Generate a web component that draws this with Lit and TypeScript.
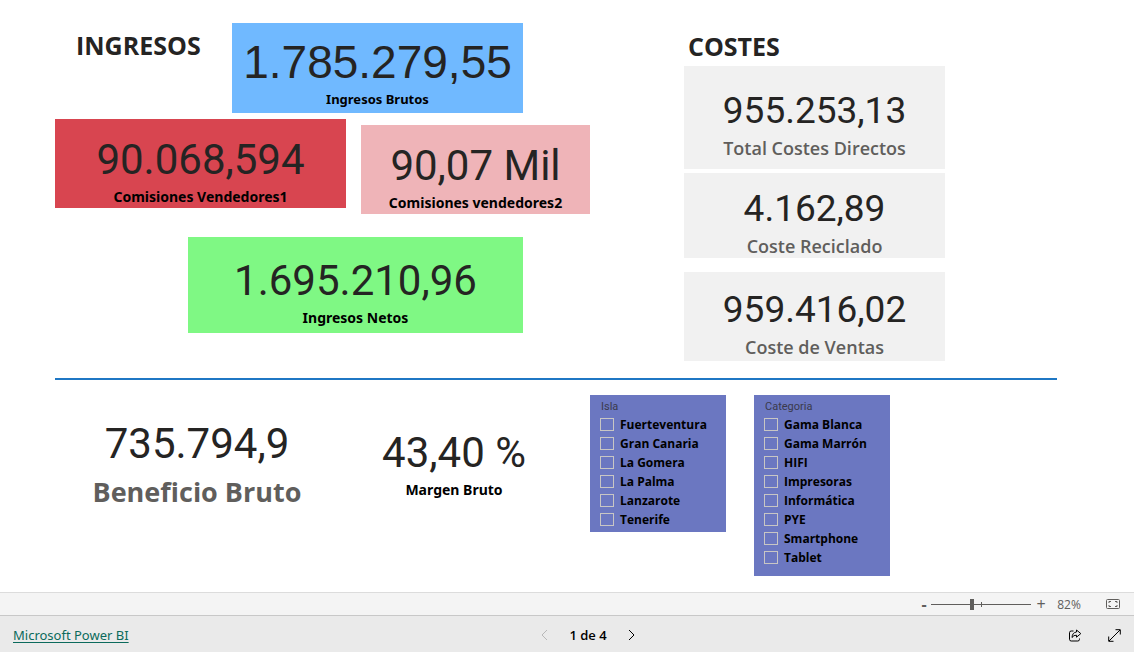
import { LitElement, html, css, svg } from "lit";
import { customElement, property, state } from "lit/decorators.js";

const sans = css`"Open Sans", "Noto Sans", sans-serif`;

@customElement("kpi-card")
export class KpiCard extends LitElement {
  @property() value = "";
  @property() label = "";

  static styles = css`
    :host {
      display: block;
      box-sizing: border-box;
      padding: 15px 0 0;
      text-align: center;
      white-space: nowrap;
      font-family: ${sans};
      font-size: 14px;
      color: #000;
    }
    .value {
      font-family: Roboto, sans-serif;
      font-size: 42px;
      line-height: 52px;
      color: #252423;
    }
    .label {
      font-family: "Noto Sans", sans-serif;
      font-weight: 700;
      line-height: 22px;
    }
    :host([look="arial"]) .value {
      font-family: "Liberation Sans", sans-serif;
      font-size: 46px;
    }
    :host([look="arial"]) .label {
      font-size: 13px;
    }
    :host([look="cost"]) .value {
      font-size: 37px;
    }
    :host([look="cost"]) .label {
      font-family: ${sans};
      font-size: 18px;
      font-weight: 600;
      color: #605e5c;
    }
    :host([look="large"]) .label {
      font-family: ${sans};
      font-size: 27px;
      line-height: 44px;
      color: #605e5c;
    }
  `;

  render() {
    return html`
      <div class="value">${this.value}</div>
      <div class="label">${this.label}</div>
    `;
  }
}

@customElement("check-slicer")
export class CheckSlicer extends LitElement {
  @property() heading = "";
  @property({ attribute: false }) options: string[] = [];

  static styles = css`
    :host {
      display: block;
      box-sizing: border-box;
      background: #6b77c1;
      padding: 3px 10px 3px;
      font-family: ${sans};
    }
    fieldset {
      border: 0;
      margin: 0;
      padding: 0;
      min-width: 0;
    }
    legend {
      padding: 0 1px;
      font-family: Roboto, sans-serif;
      font-size: 11px;
      line-height: 17px;
      color: #3a3a4c;
    }
    .option {
      display: flex;
      align-items: center;
      gap: 6px;
      height: 19px;
      font-size: 12px;
      font-weight: 700;
      white-space: nowrap;
      color: #000;
    }
    .box {
      appearance: none;
      flex: none;
      box-sizing: border-box;
      width: 14px;
      height: 13px;
      margin: 0;
      border: 1px solid #c8c6c4;
    }
    .box:checked {
      background: #252423;
    }
  `;

  render() {
    return html`
      <fieldset>
        <legend>${this.heading}</legend>
        ${this.options.map(
          (name) => html`<label class="option"><input class="box" type="checkbox" />${name}</label>`
        )}
      </fieldset>
    `;
  }
}

const icons = {
  prev: svg`<path d="M8 2 3 7 8 12" />`,
  next: svg`<path d="M3 2 8 7 3 12" />`,
  fit: svg`<rect x=".5" y=".5" width="13" height="9" rx="1" /><path d="M5 2.500H3v1.500M9 2.500h2v1.500M5 7.500H3V6M9 7.500h2V6" />`,
  share: svg`<path d="M5.500 2H3.200Q1.500 2 1.500 3.700v6.600Q1.500 12 3.200 12h6.600q1.700 0 1.700-1.700V9.500" /><path d="M8.500 1 12.800 4.600 8.500 8.200V6.200Q5.600 6 4 8.500 4.300 3.500 8.500 3Z" />`,
  expand: svg`<path d="M1 12 12 1M7.500 .7H12.300v4.800M.7 7.500v4.800H5.500" />`,
};

@customElement("app-root")
export class AppRoot extends LitElement {
  @state() private zoom = 82;

  static styles = css`
    :host {
      display: flex;
      flex-direction: column;
      min-height: 100vh;
      background: #fff;
      font-family: ${sans};
      color: #252423;
    }
    svg {
      display: block;
      fill: none;
      stroke: currentColor;
    }
    button {
      padding: 0;
      border: 0;
      background: none;
      color: inherit;
      cursor: pointer;
    }
    .report {
      flex: 1;
      padding: 23px 77px 16px 55px;
    }
    .top {
      display: grid;
      grid-template-columns: 535fr 94fr 261fr 112fr;
      border-bottom: 2px solid #1f77c4;
      padding-bottom: 17px;
    }
    .title {
      margin: 0;
      font-size: 25px;
      font-weight: 700;
      line-height: 34px;
    }
    .income {
      display: grid;
      grid-template-columns: 133fr 44fr 114fr 15fr 162fr 67fr;
      align-items: start;
      align-content: start;
    }
    .income .title {
      grid-column: 1 / 3;
      grid-row: 1;
      padding: 5px 0 0 21px;
    }
    .gross {
      grid-column: 3 / 6;
      grid-row: 1;
      margin: 0 0 6px;
      padding: 13px 0 3px;
      background: #70b9ff;
    }
    .fees {
      grid-column: 1 / 4;
      background: #d84550;
    }
    .fees-short {
      grid-column: 5 / 7;
      margin-top: 6px;
      background: #efb4b8;
    }
    .net {
      grid-column: 2 / 6;
      margin-top: 23px;
      padding: 18px 0 4px;
      background: #7ff884;
    }
    .costs {
      grid-column: 3;
      display: flex;
      flex-direction: column;
    }
    .costs .title {
      padding: 6px 0 3px 4px;
    }
    .costs kpi-card {
      background: #f1f1f1;
    }
    .direct {
      padding: 19px 0 10px;
      margin-bottom: 4px;
    }
    .recycling {
      padding: 10px 0 1px;
      margin-bottom: 14px;
    }
    .sales {
      padding: 12px 0 3px;
    }
    .bottom {
      display: grid;
      grid-template-columns: 284fr 230fr 21fr 136fr 28fr 136fr 167fr;
      align-items: start;
      padding-top: 15px;
    }
    .profit {
      padding-top: 23px;
    }
    .margin {
      padding-top: 32px;
    }
    .island {
      grid-column: 4;
    }
    .category {
      grid-column: 6;
      padding-bottom: 9px;
    }
    .zoombar {
      display: flex;
      align-items: center;
      justify-content: flex-end;
      height: 22px;
      padding: 0 14px;
      border-top: 1px solid #dcdcdc;
      border-bottom: 1px solid #c8c8c8;
      background: #f4f4f4;
      color: #605e5c;
      font-size: 12px;
    }
    .step {
      width: 20px;
      font: 16px/20px ${sans};
    }
    .minus {
      width: 14px;
      font-weight: 700;
    }
    .range {
      appearance: none;
      width: 100px;
      height: 12px;
      margin: 0;
      background: linear-gradient(#605e5c, #605e5c) 50px 4px / 1px 5px no-repeat,
        linear-gradient(#605e5c, #605e5c) 0 6px / 100% 1px no-repeat;
    }
    .range::-webkit-slider-thumb {
      appearance: none;
      width: 4px;
      height: 11px;
      background: #605e5c;
    }
    .percent {
      width: 30px;
      padding: 0 22px 0 3px;
      text-align: center;
    }
    .footer {
      display: grid;
      grid-template-columns: 1fr auto 1fr;
      align-items: center;
      height: 36px;
      padding: 2px 13px 0;
      box-sizing: border-box;
      background: #eaeaea;
      font-size: 13px;
      line-height: 20px;
      color: #000;
    }
    .brand {
      justify-self: start;
      font-family: "Noto Sans", sans-serif;
      color: #0b6a5c;
      text-underline-offset: 2px;
    }
    .pager {
      display: flex;
      align-items: center;
      gap: 19px;
      padding-left: 42px;
      font-weight: 600;
    }
    .pager button:disabled {
      color: #b8b8b8;
    }
    .actions {
      display: flex;
      justify-self: end;
      gap: 26px;
    }
  `;

  private onZoom(e: Event) {
    this.zoom = Number((e.target as HTMLInputElement).value);
  }

  render() {
    return html`
      <main class="report">
        <div class="top">
          <section class="income">
            <h2 class="title">INGRESOS</h2>
            <kpi-card class="gross" look="arial" value="1.785.279,55" label="Ingresos Brutos"></kpi-card>
            <kpi-card class="fees" value="90.068,594" label="Comisiones Vendedores1"></kpi-card>
            <kpi-card class="fees-short" value="90,07 Mil" label="Comisiones vendedores2"></kpi-card>
            <kpi-card class="net" value="1.695.210,96" label="Ingresos Netos"></kpi-card>
          </section>
          <section class="costs">
            <h2 class="title">COSTES</h2>
            <kpi-card class="direct" look="cost" value="955.253,13" label="Total Costes Directos"></kpi-card>
            <kpi-card class="recycling" look="cost" value="4.162,89" label="Coste Reciclado"></kpi-card>
            <kpi-card class="sales" look="cost" value="959.416,02" label="Coste de Ventas"></kpi-card>
          </section>
        </div>
        <div class="bottom">
          <kpi-card class="profit" look="large" value="735.794,9" label="Beneficio Bruto"></kpi-card>
          <kpi-card class="margin" value="43,40 %" label="Margen Bruto"></kpi-card>
          <check-slicer
            class="island"
            heading="Isla"
            .options=${["Fuerteventura", "Gran Canaria", "La Gomera", "La Palma", "Lanzarote", "Tenerife"]}
          ></check-slicer>
          <check-slicer
            class="category"
            heading="Categoria"
            .options=${["Gama Blanca", "Gama Marrón", "HIFI", "Impresoras", "Informática", "PYE", "Smartphone", "Tablet"]}
          ></check-slicer>
        </div>
      </main>
      <div class="zoombar">
        <button class="step minus" aria-label="Alejar" @click=${() => (this.zoom -= 10)}>-</button>
        <input class="range" type="range" min="0" max="200" aria-label="Zoom" .value=${String(this.zoom)} @input=${this.onZoom} />
        <button class="step" aria-label="Acercar" @click=${() => (this.zoom += 10)}>+</button>
        <span class="percent">${this.zoom}%</span>
        <button aria-label="Ajustar a la página"><svg width="14" height="10">${icons.fit}</svg></button>
      </div>
      <footer class="footer">
        <a class="brand" href="#">Microsoft Power BI</a>
        <nav class="pager">
          <button disabled aria-label="Anterior"><svg width="11" height="14">${icons.prev}</svg></button>
          <span>1 de 4</span>
          <button aria-label="Siguiente"><svg width="11" height="14">${icons.next}</svg></button>
        </nav>
        <div class="actions">
          <button aria-label="Compartir"><svg width="14" height="13">${icons.share}</svg></button>
          <button aria-label="Pantalla completa"><svg width="13" height="13">${icons.expand}</svg></button>
        </div>
      </footer>
    `;
  }
}
